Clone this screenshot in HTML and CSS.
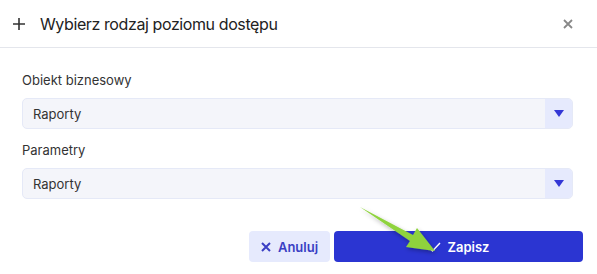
FILE: index.html
```html
<html>
<head>
	<meta charset="utf-8">
	<title>Wybierz rodzaj poziomu dostępu</title>
	<link rel="stylesheet" href="styles.css">
</head>
<body>
	<div class="dialog">
		<div class="dialogHeader">
			<span class="plusIcon">
				<svg width="14" height="14" viewBox="0 0 14 14"><path d="M7 1v12M1 7h12" stroke="#333" stroke-width="1.6"/></svg>
			</span>
			<span class="dialogTitle">Wybierz rodzaj poziomu dostępu</span>
			<span class="closeIcon">
				<svg width="10" height="10" viewBox="0 0 10 10"><path d="M1 1l8 8M9 1l-8 8" stroke="#888" stroke-width="1.8"/></svg>
			</span>
		</div>
		<div class="dialogBody">
			<div class="field">
				<div class="fieldLabel">Obiekt biznesowy</div>
				<div class="selectBox">
					<span class="selectValue">Raporty</span>
					<span class="selectArrow"><svg width="10" height="7" viewBox="0 0 10 7"><path d="M0 0h10L5 7z" fill="#3437d6"/></svg></span>
				</div>
			</div>
			<div class="field">
				<div class="fieldLabel">Parametry</div>
				<div class="selectBox">
					<span class="selectValue">Raporty</span>
					<span class="selectArrow"><svg width="10" height="7" viewBox="0 0 10 7"><path d="M0 0h10L5 7z" fill="#3437d6"/></svg></span>
				</div>
			</div>
		</div>
		<div class="dialogFooter">
			<a class="btn cancelBtn" href="#">
				<svg width="10" height="10" viewBox="0 0 10 10"><path d="M1 1l8 8M9 1l-8 8" stroke="#3a3fc4" stroke-width="2"/></svg>
				Anuluj
			</a>
			<a class="btn saveBtn" href="#">
				<svg width="13" height="10" viewBox="0 0 13 10"><path d="M1 5.5l3.5 3.5L12 1" stroke="#fff" stroke-width="1.4" fill="none"/></svg>
				Zapisz
			</a>
		</div>
	</div>
	<svg class="pointer" width="597" height="274" viewBox="0 0 597 274">
		<defs>
			<filter id="shade" x="-20%" y="-20%" width="140%" height="140%">
				<feDropShadow dx="1" dy="2" stdDeviation="2" flood-color="#000" flood-opacity="0.3"/>
			</filter>
		</defs>
		<polygon points="360,207 413,235 417,228 435,251 406,247 410,241" fill="#8fd33e" filter="url(#shade)"/>
	</svg>
</body>
</html>
```

FILE: styles.css
```css
body {
	margin: 0;
	background: #fff;
	font-family: Inter, "Noto Sans", sans-serif;
	color: #222;
}
.dialog {
	width: 597px;
	height: 274px;
}
.dialogHeader {
	height: 47px;
	border-bottom: 1px solid #e4e6ec;
	display: flex;
	align-items: center;
	padding: 0 24px 0 12px;
}
.plusIcon {
	display: flex;
	width: 14px;
	margin-right: 14px;
}
.dialogTitle {
	font-size: 16px;
	letter-spacing: -0.4px;
	flex: 1;
	color: #222;
}
.closeIcon {
	display: flex;
}
.dialogBody {
	padding: 23px 24px 0 22px;
}
.field {
	margin-bottom: 12px;
}
.fieldLabel {
	font-size: 13px;
	color: #333;
	height: 19px;
	line-height: 19px;
	margin-bottom: 8px;
}
.selectBox {
	height: 29px;
	border: 1px solid #e5e9f7;
	border-radius: 5px;
	background: #f4f5fa;
	display: flex;
	align-items: center;
	overflow: hidden;
}
.selectValue {
	flex: 1;
	padding-left: 10px;
	font-size: 13px;
	color: #333;
}
.selectArrow {
	width: 27px;
	height: 29px;
	background: #e6eafd;
	display: flex;
	align-items: center;
	justify-content: center;
}
.dialogFooter {
	display: flex;
	justify-content: flex-end;
	gap: 4px;
	padding: 20px 14px 0 0;
}
.btn {
	height: 31px;
	border-radius: 4px;
	display: flex;
	align-items: center;
	justify-content: center;
	gap: 7px;
	font-size: 13px;
	font-weight: 600;
	text-decoration: none;
}
.cancelBtn {
	width: 81px;
	background: #e6eafd;
	color: #3a3fc4;
}
.saveBtn {
	width: 249px;
	background: #2b35d2;
	color: #fff;
}
.pointer {
	position: absolute;
	left: 0;
	top: 0;
	pointer-events: none;
}
```
